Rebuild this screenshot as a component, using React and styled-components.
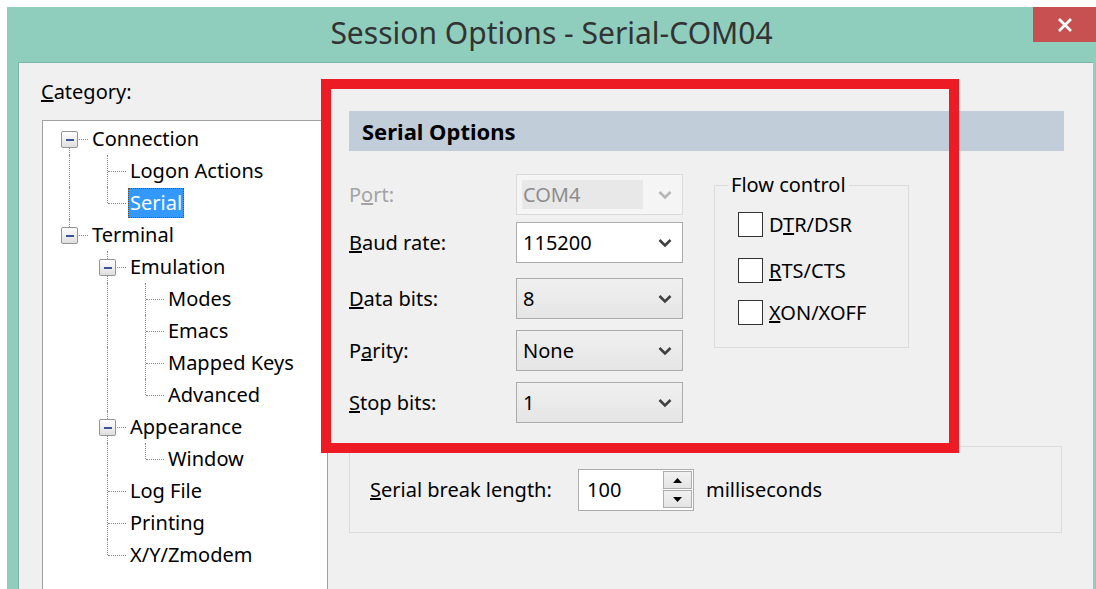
import React from 'react';
import styled, { createGlobalStyle } from 'styled-components';

const GlobalStyle = createGlobalStyle`
  html, body {
    margin: 0;
    padding: 0;
    background: #ffffff;
    overflow: hidden;
  }
  body {
    font-family: "Noto Sans", "Open Sans", sans-serif;
    color: #000000;
  }
`;

const Page = styled.div`
  width: 1096px;
  height: 589px;
  padding: 7px 0 0 7px;
  box-sizing: border-box;
  overflow: hidden;
`;

const Window = styled.div`
  height: 600px;
  background: #8fcdbd;
  display: flex;
  flex-direction: column;
`;

const TitleBar = styled.div`
  height: 55px;
  flex-shrink: 0;
  display: grid;
  grid-template-columns: 1fr auto 1fr;
`;

const Title = styled.h1`
  grid-column: 2;
  margin: 0;
  font-size: 30px;
  font-weight: 400;
  line-height: 52px;
  color: #333333;
`;

const CloseButton = styled.div`
  justify-self: end;
  width: 63px;
  height: 35px;
  background: #c75050;
  display: flex;
  align-items: center;
  justify-content: center;
`;

const Body = styled.div`
  position: relative;
  flex: 1;
  margin: 0 3px 0 11px;
  background: #f0f0f0;
  border-top: 1px solid #7cb4a5;
  border-left: 1px solid #7cb4a5;
  display: flex;
`;

const LeftCol = styled.div`
  display: flex;
  flex-direction: column;
  padding: 17px 0 0 22px;
`;

const CategoryLabel = styled.div`
  font-size: 20px;
  line-height: 24px;
`;

const Tree = styled.div`
  flex: 1;
  width: 286px;
  box-sizing: border-box;
  margin: 16px 0 0 1px;
  padding: 2px 0 0 8px;
  background: #ffffff;
  border: 1px solid #a0a0a0;
  border-bottom: none;
`;

const TreeRow = styled.div`
  display: flex;
  align-items: center;
  height: 32px;
`;

const lineFor = {
  '': null,
  I: 'top: 0; bottom: 0;',
  T: 'top: 0; bottom: 0;',
  L: 'top: 0; height: 16px;',
  Bd: 'top: 16px; bottom: 0;',
  Bu: 'top: 0; height: 16px;',
  Bud: 'top: 0; bottom: 0;',
};

const Guide = styled.span`
  position: relative;
  flex-shrink: 0;
  width: 38px;
  height: 32px;
  &::before {
    content: '';
    position: absolute;
    left: 18px;
    border-left: 1px dotted #8c8c8c;
    ${(p) => lineFor[p.$kind] || 'display: none;'}
  }
  &::after {
    content: '';
    position: absolute;
    left: 19px;
    width: 18px;
    top: 16px;
    border-top: 1px dotted #8c8c8c;
    display: ${(p) => (p.$kind === '' || p.$kind === 'I' ? 'none' : 'block')};
  }
`;

const ExpandBox = styled.span`
  position: absolute;
  z-index: 1;
  left: 10px;
  top: 8px;
  width: 17px;
  height: 17px;
  box-sizing: border-box;
  border: 1px solid #959595;
  border-radius: 2px;
  background: linear-gradient(#ffffff, #dedede);
  display: flex;
  align-items: center;
  justify-content: center;
  &::before {
    content: '';
    width: 8px;
    height: 2px;
    background: #3a5497;
  }
`;

const NodeLabel = styled.span`
  margin-left: 1px;
  padding: 0 2px;
  font-size: 20px;
  line-height: 30px;
  white-space: nowrap;
  background: ${(p) => (p.$selected ? '#3399ff' : 'transparent')};
  color: ${(p) => (p.$selected ? '#ffffff' : '#000000')};
  outline: ${(p) => (p.$selected ? '1px dotted #7a4a10' : 'none')};
  outline-offset: -1px;
`;

const RightCol = styled.div`
  margin-left: 21px;
  padding-top: 48px;
  width: 715px;
`;

const SectionHeader = styled.div`
  height: 40px;
  padding-left: 13px;
  background: #c1cdd9;
  font-size: 22px;
  font-weight: 700;
  line-height: 40px;
`;

const FormArea = styled.div`
  display: flex;
  align-items: flex-start;
`;

const Fields = styled.div`
  display: flex;
  flex-direction: column;
`;

const FieldRow = styled.div`
  display: grid;
  grid-template-columns: 167px 167px;
  align-items: center;
  margin-top: ${(p) => p.$top}px;
`;

const FieldLabel = styled.span`
  font-size: 20px;
  color: ${(p) => (p.$disabled ? '#a3a3a3' : '#000000')};
`;

const Combo = styled.div`
  height: 41px;
  box-sizing: border-box;
  display: flex;
  align-items: center;
  padding: 0 10px 0 5px;
  border: 1px solid ${(p) => (p.$variant === 'disabled' ? '#dadada' : '#acacac')};
  background: ${(p) =>
    p.$variant === 'edit'
      ? '#ffffff'
      : p.$variant === 'disabled'
      ? '#f5f5f5'
      : 'linear-gradient(#f0f0f0, #e5e5e5)'};
  color: ${(p) => (p.$variant === 'disabled' ? '#8d8d8d' : '#000000')};
`;

const ComboValue = styled.span`
  flex: ${(p) => (p.$disabled ? '0 0 120px' : '1')};
  align-self: stretch;
  margin: ${(p) => (p.$disabled ? '5px 0' : '0')};
  padding-left: 1px;
  display: flex;
  align-items: center;
  font-size: 20px;
  background: ${(p) => (p.$disabled ? '#e8e8e8' : 'transparent')};
`;

const Chevron = styled.svg`
  margin-left: auto;
  flex-shrink: 0;
`;

const FlowGroup = styled.fieldset`
  margin: 22px 0 0 31px;
  padding: 14px 0 0 23px;
  width: 195px;
  height: 175px;
  box-sizing: border-box;
  border: 1px solid #dcdcdc;
  min-width: 0;
`;

const GroupLegend = styled.legend`
  margin-left: -10px;
  padding: 0 3px;
  font-size: 20px;
  line-height: 24px;
`;

const CheckRow = styled.label`
  display: flex;
  align-items: center;
  gap: 6px;
  height: 26px;
  margin-top: ${(p) => p.$top}px;
  font-size: 20px;
`;

const CheckBox = styled.span`
  width: 25px;
  height: 25px;
  box-sizing: border-box;
  border: 1px solid #333333;
  background: #ffffff;
`;

const BreakGroup = styled.div`
  margin-top: 23px;
  width: 713px;
  height: 87px;
  box-sizing: border-box;
  border: 1px solid #dcdcdc;
  display: grid;
  grid-template-columns: 208px auto auto;
  justify-content: start;
  align-items: center;
  padding-left: 20px;
  font-size: 20px;
`;

const SpinBox = styled.div`
  width: 116px;
  height: 42px;
  box-sizing: border-box;
  border: 1px solid #acacac;
  background: #ffffff;
  display: flex;
  align-items: center;
`;

const SpinValue = styled.span`
  flex: 1;
  padding-left: 8px;
  font-size: 20px;
`;

const SpinButtons = styled.div`
  display: flex;
  flex-direction: column;
  gap: 1px;
  margin-right: 1px;
`;

const SpinButton = styled.div`
  width: 29px;
  height: 18px;
  box-sizing: border-box;
  border: 1px solid #acacac;
  background: linear-gradient(#f2f2f2, #e4e4e4);
  display: flex;
  align-items: center;
  justify-content: center;
`;

const Unit = styled.span`
  margin-left: 12px;
`;

const Highlight = styled.div`
  position: absolute;
  left: 302px;
  top: 16px;
  width: 638px;
  height: 374px;
  box-sizing: border-box;
  border: 10px solid #ed1c24;
  pointer-events: none;
`;

const TREE = [
  { label: 'Connection', guides: ['Bd'] },
  { label: 'Logon Actions', guides: ['I', 'T'] },
  { label: 'Serial', guides: ['I', 'L'], selected: true },
  { label: 'Terminal', guides: ['Bu'] },
  { label: 'Emulation', guides: ['', 'Bud'] },
  { label: 'Modes', guides: ['', 'I', 'T'] },
  { label: 'Emacs', guides: ['', 'I', 'T'] },
  { label: 'Mapped Keys', guides: ['', 'I', 'T'] },
  { label: 'Advanced', guides: ['', 'I', 'L'] },
  { label: 'Appearance', guides: ['', 'Bud'] },
  { label: 'Window', guides: ['', 'I', 'L'] },
  { label: 'Log File', guides: ['', 'T'] },
  { label: 'Printing', guides: ['', 'T'] },
  { label: 'X/Y/Zmodem', guides: ['', 'L'] },
];

const FIELDS = [
  { pre: 'P', key: 'o', post: 'rt:', value: 'COM4', variant: 'disabled', top: 23 },
  { pre: '', key: 'B', post: 'aud rate:', value: '115200', variant: 'edit', top: 7 },
  { pre: '', key: 'D', post: 'ata bits:', value: '8', variant: 'list', top: 15 },
  { pre: 'P', key: 'a', post: 'rity:', value: 'None', variant: 'list', top: 11 },
  { pre: '', key: 'S', post: 'top bits:', value: '1', variant: 'list', top: 11 },
];

const FLOW = [
  { pre: 'D', key: 'T', post: 'R/DSR', top: 0 },
  { pre: '', key: 'R', post: 'TS/CTS', top: 20 },
  { pre: '', key: 'X', post: 'ON/XOFF', top: 16 },
];

function TreeNode({ node }) {
  return (
    <TreeRow>
      {node.guides.map((kind, i) => (
        <Guide key={i} $kind={kind}>
          {kind.startsWith('B') && <ExpandBox />}
        </Guide>
      ))}
      <NodeLabel $selected={node.selected}>{node.label}</NodeLabel>
    </TreeRow>
  );
}

function ComboBox({ value, variant }) {
  const disabled = variant === 'disabled';
  return (
    <Combo $variant={variant}>
      <ComboValue $disabled={disabled}>{value}</ComboValue>
      <Chevron width="14" height="10" viewBox="0 0 14 10">
        <polyline
          points="1.5,2 7,7.5 12.5,2"
          fill="none"
          stroke={disabled ? '#b5b5b5' : '#404040'}
          strokeWidth="2.6"
        />
      </Chevron>
    </Combo>
  );
}

export default function App() {
  return (
    <>
      <GlobalStyle />
      <Page>
        <Window>
          <TitleBar>
            <Title>Session Options - Serial-COM04</Title>
            <CloseButton>
              <svg width="16" height="16" viewBox="0 0 16 16">
                <path d="M2 2 L14 14 M14 2 L2 14" stroke="#ffffff" strokeWidth="2.8" />
              </svg>
            </CloseButton>
          </TitleBar>
          <Body>
            <LeftCol>
              <CategoryLabel>
                <u>C</u>ategory:
              </CategoryLabel>
              <Tree>
                {TREE.map((node) => (
                  <TreeNode key={node.label} node={node} />
                ))}
              </Tree>
            </LeftCol>
            <RightCol>
              <SectionHeader>Serial Options</SectionHeader>
              <FormArea>
                <Fields>
                  {FIELDS.map((f) => (
                    <FieldRow key={f.post} $top={f.top}>
                      <FieldLabel $disabled={f.variant === 'disabled'}>
                        {f.pre}
                        <u>{f.key}</u>
                        {f.post}
                      </FieldLabel>
                      <ComboBox value={f.value} variant={f.variant} />
                    </FieldRow>
                  ))}
                </Fields>
                <FlowGroup>
                  <GroupLegend>Flow control</GroupLegend>
                  {FLOW.map((c) => (
                    <CheckRow key={c.post} $top={c.top}>
                      <CheckBox />
                      <span>
                        {c.pre}
                        <u>{c.key}</u>
                        {c.post}
                      </span>
                    </CheckRow>
                  ))}
                </FlowGroup>
              </FormArea>
              <BreakGroup>
                <span>
                  <u>S</u>erial break length:
                </span>
                <SpinBox>
                  <SpinValue>100</SpinValue>
                  <SpinButtons>
                    <SpinButton>
                      <svg width="9" height="5" viewBox="0 0 9 5">
                        <polygon points="0,5 4.5,0 9,5" fill="#000000" />
                      </svg>
                    </SpinButton>
                    <SpinButton>
                      <svg width="9" height="5" viewBox="0 0 9 5">
                        <polygon points="0,0 4.5,5 9,0" fill="#000000" />
                      </svg>
                    </SpinButton>
                  </SpinButtons>
                </SpinBox>
                <Unit>milliseconds</Unit>
              </BreakGroup>
            </RightCol>
            <Highlight />
          </Body>
        </Window>
      </Page>
    </>
  );
}
